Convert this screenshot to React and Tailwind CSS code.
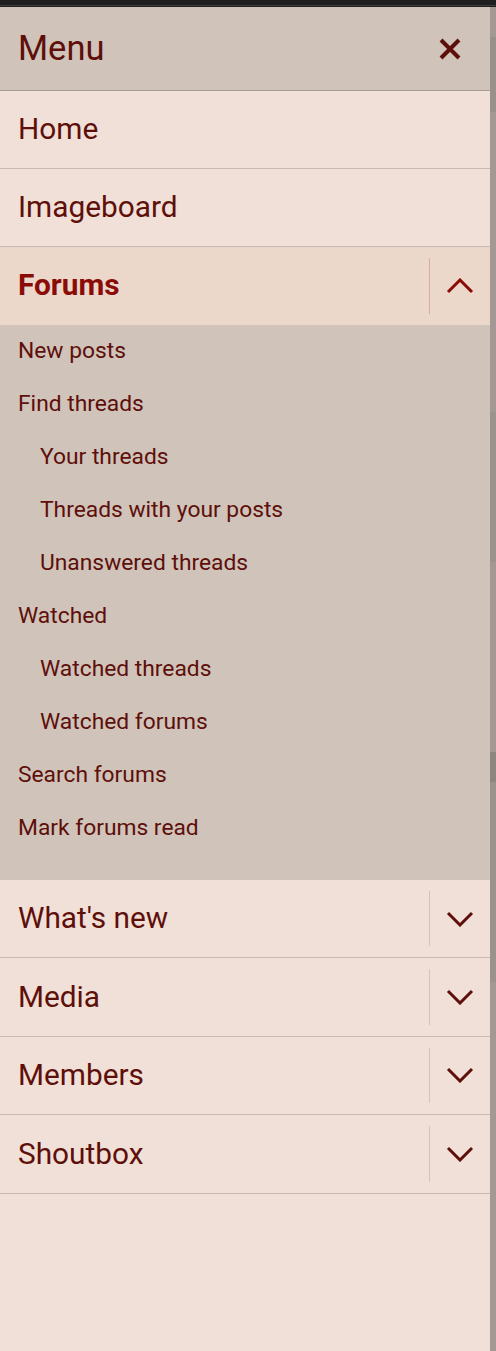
import React from 'react';

const font = { fontFamily: 'Roboto, "Noto Sans", sans-serif' };

const subItems = [
  { label: 'New posts', level: 0 },
  { label: 'Find threads', level: 0 },
  { label: 'Your threads', level: 1 },
  { label: 'Threads with your posts', level: 1 },
  { label: 'Unanswered threads', level: 1 },
  { label: 'Watched', level: 0 },
  { label: 'Watched threads', level: 1 },
  { label: 'Watched forums', level: 1 },
  { label: 'Search forums', level: 0 },
  { label: 'Mark forums read', level: 0 },
];

function Chevron({ up, color }) {
  return (
    <svg width="28" height="16" viewBox="0 0 28 16" fill="none">
      <path
        d={up ? 'M2 14 L14 2 L26 14' : 'M2 2 L14 14 L26 2'}
        stroke={color}
        strokeWidth="3"
      />
    </svg>
  );
}

function Row({ label, expandable }) {
  return (
    <div
      className={
        'flex items-stretch border-b border-[#c9b9b1] bg-[#f0e0d7] ' +
        (expandable ? 'h-[78.4px]' : 'h-[78px]')
      }
    >
      <div className="flex-1 flex items-center pl-[18px] text-[29.8px] text-[#5e0f0a]">
        {label}
      </div>
      {expandable && (
        <div className="flex items-center py-[11px]">
          <div className="w-px h-full bg-[#d3c3bb]" />
          <div className="w-[60px] flex items-center justify-center">
            <Chevron color="#5e0f0a" />
          </div>
        </div>
      )}
    </div>
  );
}

export default function App() {
  return (
    <div className="w-[496px] h-[1351px] flex flex-col bg-[#1e1e1e] overflow-hidden" style={font}>
      <div className="h-[6px] bg-[#1e1e1e] border-b border-[#3c3c3c] shrink-0" />
      <div className="flex flex-1 min-h-0 pt-[1px]">
        <div className="w-[490px] flex flex-col bg-[#f0e0d7]">
          <div className="h-[84px] shrink-0 flex items-center justify-between bg-[#cfc3ba] border-b border-[#a99d96] pl-[18px] pr-[28px]">
            <span className="text-[34.5px] text-[#5e0f0a]">Menu</span>
            <svg width="24" height="24" viewBox="0 0 24 24">
              <path d="M3 3 L21 21 M21 3 L3 21" stroke="#5e0f0a" strokeWidth="4" />
            </svg>
          </div>
          <Row label="Home" />
          <Row label="Imageboard" />
          <div className="flex items-stretch h-[77.5px] bg-[#ecd7cb]">
            <div className="flex-1 flex items-center pl-[18px] text-[29.8px] font-bold text-[#8a0c07]">Forums</div>
            <div className="flex items-center py-[11px]">
              <div className="w-px h-full bg-[#d6ada3]" />
              <div className="w-[60px] flex items-center justify-center">
                <Chevron up color="#8a0c07" />
              </div>
            </div>
          </div>
          <div className="bg-[#cfc3ba] pb-[25.5px] flex flex-col">
            {subItems.map((it) => (
              <div
                key={it.label}
                className={
                  'h-[53px] flex items-center text-[22.8px] text-[#5e0f0a] ' +
                  (it.level ? 'pl-[40px]' : 'pl-[18px]')
                }
              >
                {it.label}
              </div>
            ))}
          </div>
          <Row label="What's new" expandable />
          <Row label="Media" expandable />
          <Row label="Members" expandable />
          <Row label="Shoutbox" expandable />
          <div className="flex-1" />
        </div>
        <div className="w-[6px] bg-[#a39893] flex flex-col">
          <div className="h-[30px]" />
          <div className="h-[75px] bg-[#9a908b]" />
          <div className="h-[300px]" />
          <div className="h-[150px] bg-[#9c928d]" />
          <div className="h-[190px]" />
          <div className="h-[30px] bg-[#8f8580]" />
          <div className="h-[200px] bg-[#9c928d]" />
        </div>
      </div>
    </div>
  );
}
